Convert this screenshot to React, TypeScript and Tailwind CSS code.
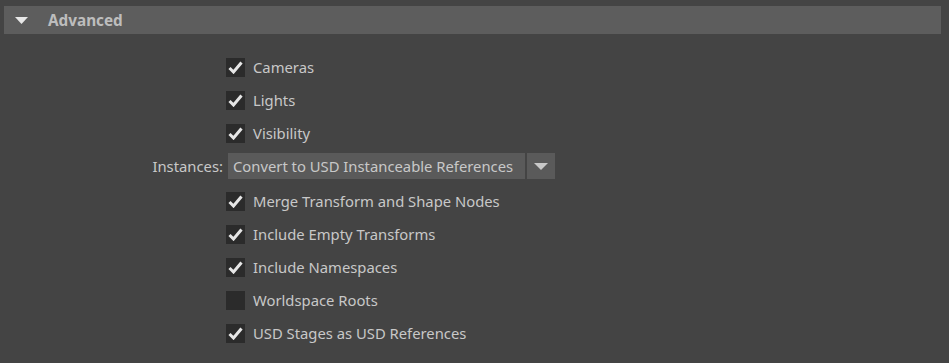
import React from "react";

const options = [
  { label: "Cameras", checked: true },
  { label: "Lights", checked: true },
  { label: "Visibility", checked: true },
];

const moreOptions = [
  { label: "Merge Transform and Shape Nodes", checked: true },
  { label: "Include Empty Transforms", checked: true },
  { label: "Include Namespaces", checked: true },
  { label: "Worldspace Roots", checked: false },
  { label: "USD Stages as USD References", checked: true },
];

function CheckRow({ label, checked }: { label: string; checked: boolean }) {
  return (
    <div className="flex h-[33px] items-center">
      <div className="w-[226px] shrink-0" />
      <div className="flex h-[19px] w-[19px] items-center justify-center bg-[#2b2b2b]">
        {checked && (
          <svg width="15" height="13" viewBox="0 0 15 13">
            <path d="M1.5 7 L5.5 11 L13.5 1.5" fill="none" stroke="#e6e6e6" strokeWidth="3" />
          </svg>
        )}
      </div>
      <span className="ml-[8px] text-[14.8px] text-[#c8c8c8]">{label}</span>
    </div>
  );
}

export default function App() {
  return (
    <div
      className="h-[363px] w-[949px] bg-[#444444] pt-[6px]"
      style={{ fontFamily: '"Noto Sans", "Open Sans", sans-serif' }}
    >
      <div className="mx-[4px] mr-[8px] flex h-[28px] items-center bg-[#5d5d5d]">
        <svg width="13" height="7" viewBox="0 0 13 7" className="ml-[11px]">
          <path d="M0 0 H13 L6.5 7 Z" fill="#e8e8e8" />
        </svg>
        <span className="ml-[20px] text-[15.3px] font-bold text-[#bdbdbd]">Advanced</span>
      </div>

      <div className="pt-[17px]">
        {options.map((o) => (
          <CheckRow key={o.label} label={o.label} checked={o.checked} />
        ))}

        <div className="flex h-[35px] items-start pt-[3px]">
          <div className="flex h-[26px] w-[226px] shrink-0 items-center justify-end pr-[3px] text-[14.8px] text-[#c8c8c8]">
            Instances:
          </div>
          <div className="ml-[2px] flex h-[26px] items-stretch">
            <div className="flex w-[297px] items-center bg-[#5a5a5a] pl-[5px] text-[14.8px] text-[#c8c8c8]">
              Convert to USD Instanceable References
            </div>
            <div className="ml-[2px] flex w-[28px] items-center justify-center bg-[#5a5a5a]">
              <svg width="14" height="7" viewBox="0 0 14 7">
                <path d="M0 0 H14 L7 7 Z" fill="#c8c8c8" />
              </svg>
            </div>
          </div>
        </div>

        {moreOptions.map((o) => (
          <CheckRow key={o.label} label={o.label} checked={o.checked} />
        ))}
      </div>
    </div>
  );
}
